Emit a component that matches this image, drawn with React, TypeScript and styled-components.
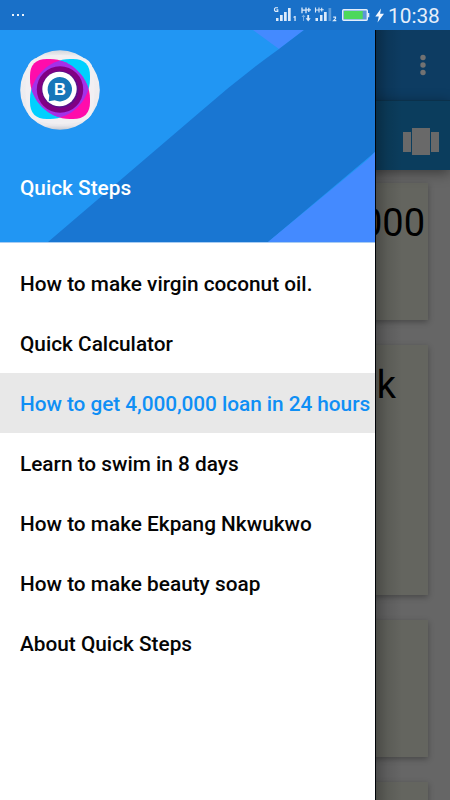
import React from "react";
import styled, { createGlobalStyle } from "styled-components";

const Global = createGlobalStyle`
  * { box-sizing: border-box; }
  body { margin: 0; background: #666; font-family: Roboto, sans-serif; overflow: hidden; }
`;

const Screen = styled.div`
  width: 450px;
  height: 800px;
  display: flex;
  flex-direction: column;
  overflow: hidden;
`;

const StatusBar = styled.header`
  height: 30px;
  flex: none;
  display: flex;
  justify-content: space-between;
  background: #1970c8;
  padding: 0 10px 0 12px;
`;

const Dots = styled.div`
  display: flex;
  gap: 3px;
  padding-top: 14px;
`;

const Dot = styled.i`
  width: 2px;
  height: 2px;
  background: #e8f2fc;
`;

const StatusRight = styled.div`
  display: flex;
`;

const Clock = styled.time`
  width: 52px;
  color: #e6effa;
  font-size: 20.8px;
  line-height: 33px;
  white-space: nowrap;
`;

const Stage = styled.div`
  flex: 1;
  min-height: 0;
  display: grid;
  grid-template: 770px / 450px;
`;

const Page = styled.main`
  grid-area: 1 / 1;
  display: flex;
  flex-direction: column;
  overflow: hidden;
  background: #666;
`;

const Bar = styled.div<{ $h: number; $tone: string; $top: number; $right: number }>`
  height: ${(p) => p.$h}px;
  flex: none;
  display: flex;
  justify-content: flex-end;
  background: ${(p) => p.$tone};
  padding: ${(p) => p.$top}px ${(p) => p.$right}px 0 0;
`;

const TabBar = styled(Bar)`
  position: relative;
  border-top: 1px solid #0b314b;
  box-shadow: 0 3px 12px rgba(0, 0, 0, 0.42);
`;

const Cards = styled.div`
  display: flex;
  flex-direction: column;
  gap: 25px;
  padding: 13px 22px 0 22px;
`;

const Card = styled.article<{ $h: number; $inset?: number }>`
  height: ${(p) => p.$h}px;
  flex: none;
  padding: 18px ${(p) => p.$inset ?? 0}px 0 0;
  background: #64655f;
  box-shadow: 0 2px 6px rgba(0, 0, 0, 0.3);
  color: #000;
  font-size: 38px;
  line-height: 44px;
  text-align: right;
`;

const DrawerLayer = styled.div`
  grid-area: 1 / 1;
  z-index: 1;
  display: flex;
`;

const Drawer = styled.aside`
  width: 375px;
  background: #fff;
`;

const DrawerEdge = styled.div`
  width: 1px;
  background: #000308;
`;

const DrawerShade = styled.div`
  width: 26px;
  background: linear-gradient(90deg, rgba(0, 0, 0, 0.26), rgba(0, 0, 0, 0.09) 45%, rgba(0, 0, 0, 0));
`;

const Hero = styled.div`
  height: 213px;
  display: grid;
  grid-template: 212px / 375px;
  border-bottom: 1px solid #a8ccf2;
`;

const HeroArt = styled.svg`
  grid-area: 1 / 1;
  display: block;
`;

const HeroContent = styled.div`
  grid-area: 1 / 1;
  z-index: 1;
  display: flex;
  flex-direction: column;
  padding: 20px 0 0 20px;
`;

const Name = styled.h1`
  margin: 44px 0 0;
  color: #fff;
  font-size: 20.8px;
  font-weight: 500;
  line-height: 28px;
`;

const Menu = styled.nav`
  padding-top: 10px;
`;

const Item = styled.div<{ $active?: boolean }>`
  height: 60px;
  padding-left: 20px;
  line-height: 63px;
  font-size: 20.8px;
  font-weight: 500;
  letter-spacing: ${(p) => (p.$active ? "-0.05px" : "0")};
  white-space: nowrap;
  color: ${(p) => (p.$active ? "#0f8ff5" : "#050505")};
  background: ${(p) => (p.$active ? "#e8e8e8" : "transparent")};
`;

const SignalIcons = () => (
  <svg width="115" height="30" viewBox="273 0 115 30" fill="#dceafa">
    <path d="M278 7.8h-2.6l-.9.9v1.8l.9.9h2.4V9.8h-1.3" fill="none" stroke="#dceafa" strokeWidth="1.1" />
    <path d="M276 18h2.5v3H276zM280 15h2.7v6H280zM284 12h2.7v9H284zM288 8h2.7v13H288z" />
    <path d="M293.4 16.8l1.4-.8h.9v5h-1.3v-3.6l-1 .3z" />
    <path d="M302 7.5v5.8M306 7.5v5.8M302 10.2h4M306.7 9.8h4.2M308.8 7.7v4.2" fill="none" stroke="#dceafa" strokeWidth="1.3" />
    <path d="M303 21v-4h-1.5l2-2.5 2 2.5H304v4z" opacity=".5" />
    <path d="M307.3 15h1.8v3.3h1.6l-2.5 3.2-2.5-3.2h1.6z" />
    <path d="M315.5 7.5v5M319 7.5v5M315.5 10h3.5M319.8 9.7h3.9M321.7 7.8v3.8" fill="none" stroke="#dceafa" strokeWidth="1.1" />
    <path d="M315.5 18h2.5v3h-2.5zM320 15h2.5v6H320zM324 12h2.7v9H324z" />
    <path d="M328.5 8h2.7v13h-2.7z" opacity=".35" />
    <path d="M333.2 17.2h2.3v1.4l-2 2.1h2.8" fill="none" stroke="#dceafa" strokeWidth="1.2" />
    <rect x="342.7" y="9.7" width="24.6" height="10.6" rx="1" fill="#5b96d8" stroke="#e3eefb" strokeWidth="1.4" />
    <rect x="344" y="11" width="18.7" height="8" fill="#4cd85c" />
    <path d="M368 13h1.3v4.3H368z" />
    <path d="M381 8.5l-5.7 8h3.5l-1.3 6 6.5-8.7h-3.9z" fill="#f4f8ff" />
  </svg>
);

const leaf = "M10 26Q10 9 27 9H30C51 9 70 28 70 49V52Q70 69 53 69H50C29 69 10 50 10 29Z";
const crossLeaf = "M70 26Q70 9 53 9H50C29 9 10 28 10 49V52Q10 69 27 69H30C51 69 70 50 70 29Z";

const Logo = () => (
  <svg width="80" height="80" viewBox="0 0 80 80">
    <defs>
      <linearGradient id="rim" x1="0" y1="0" x2="0" y2="1">
        <stop offset="0" stopColor="#d3d6dc" />
        <stop offset=".08" stopColor="#f1f0f2" />
        <stop offset=".85" stopColor="#eae9ed" />
        <stop offset=".94" stopColor="#eceaee" />
        <stop offset="1" stopColor="#c5c9d2" />
      </linearGradient>
      <clipPath id="leafClip">
        <path d={leaf} />
      </clipPath>
    </defs>
    <circle cx="40" cy="40" r="39.8" fill="url(#rim)" />
    <path d="M7 20Q8 9 20 7Q40 3 60 7Q72 9 73 20Q76 40 73 60Q71 70 60 72Q40 76 20 72Q9 70 7 60Q4 40 7 20Z" fill="#f1eff2" />
    <path d={crossLeaf} fill="#00d0ff" />
    <path d={leaf} fill="#ff0cab" />
    <path clipPath="url(#leafClip)" d={crossLeaf} fill="#a431e8" />
    <circle cx="40" cy="39.5" r="23.2" fill="#800083" />
    <circle cx="40" cy="39.5" r="18.5" fill="#5b108b" />
    <circle cx="39.5" cy="39" r="17.2" fill="#fff" />
    <path d="M28.7 51.2L29.3 45.4A12.2 12.2 0 1 1 34.7 50.3Z" fill="#1776b9" />
    <text x="39.9" y="45" textAnchor="middle" fontFamily="Liberation Sans, sans-serif" fontSize="16.5" fontWeight="700" fill="#fff">B</text>
  </svg>
);

const items = [
  "How to make virgin coconut oil.",
  "Quick Calculator",
  "How to get 4,000,000 loan in 24 hours",
  "Learn to swim in 8 days",
  "How to make Ekpang Nkwukwo",
  "How to make beauty soap",
  "About Quick Steps",
];

export default function App() {
  return (
    <>
      <Global />
      <Screen>
        <StatusBar>
          <Dots><Dot /><Dot /><Dot /></Dots>
          <StatusRight>
            <SignalIcons />
            <Clock>10:38</Clock>
          </StatusRight>
        </StatusBar>
        <Stage>
          <Page>
            <Bar $h={70} $tone="#0d3c62" $top={24} $right={24.5}>
              <svg width="6" height="24" fill="#727272">
                <circle cx="3" cy="3.5" r="2.7" />
                <circle cx="3" cy="11" r="2.7" />
                <circle cx="3" cy="18.5" r="2.7" />
              </svg>
            </Bar>
            <TabBar $h={70} $tone="#0b3d5d" $top={27} $right={11}>
              <svg width="36" height="28" fill="#696969">
                <path d="M0 4h8v20H0zM9 0h18v27H9zM28 4h8v20h-8z" />
              </svg>
            </TabBar>
            <Cards>
              <Card $h={137} $inset={3}>000</Card>
              <Card $h={250} $inset={32}>k</Card>
              <Card $h={137} />
              <Card $h={137} />
            </Cards>
          </Page>
          <DrawerLayer>
            <Drawer>
              <Hero>
                <HeroArt width="375" height="212" viewBox="0 0 375 212">
                  <path fill="#2196f3" d="M0 0h375v212H0z" />
                  <path fill="#448aff" d="M253 0h51l-25 19z" />
                  <path fill="#1976d2" d="M304 0h71v122L268 212H48L200 82Q240 47 279 19z" />
                  <path fill="#448aff" d="M375 122v90H268L360 136Q369 129 375 122z" />
                </HeroArt>
                <HeroContent>
                  <Logo />
                  <Name>Quick Steps</Name>
                </HeroContent>
              </Hero>
              <Menu>
                {items.map((label, i) => (
                  <Item key={label} $active={i === 2}>{label}</Item>
                ))}
              </Menu>
            </Drawer>
            <DrawerEdge />
            <DrawerShade />
          </DrawerLayer>
        </Stage>
      </Screen>
    </>
  );
}
